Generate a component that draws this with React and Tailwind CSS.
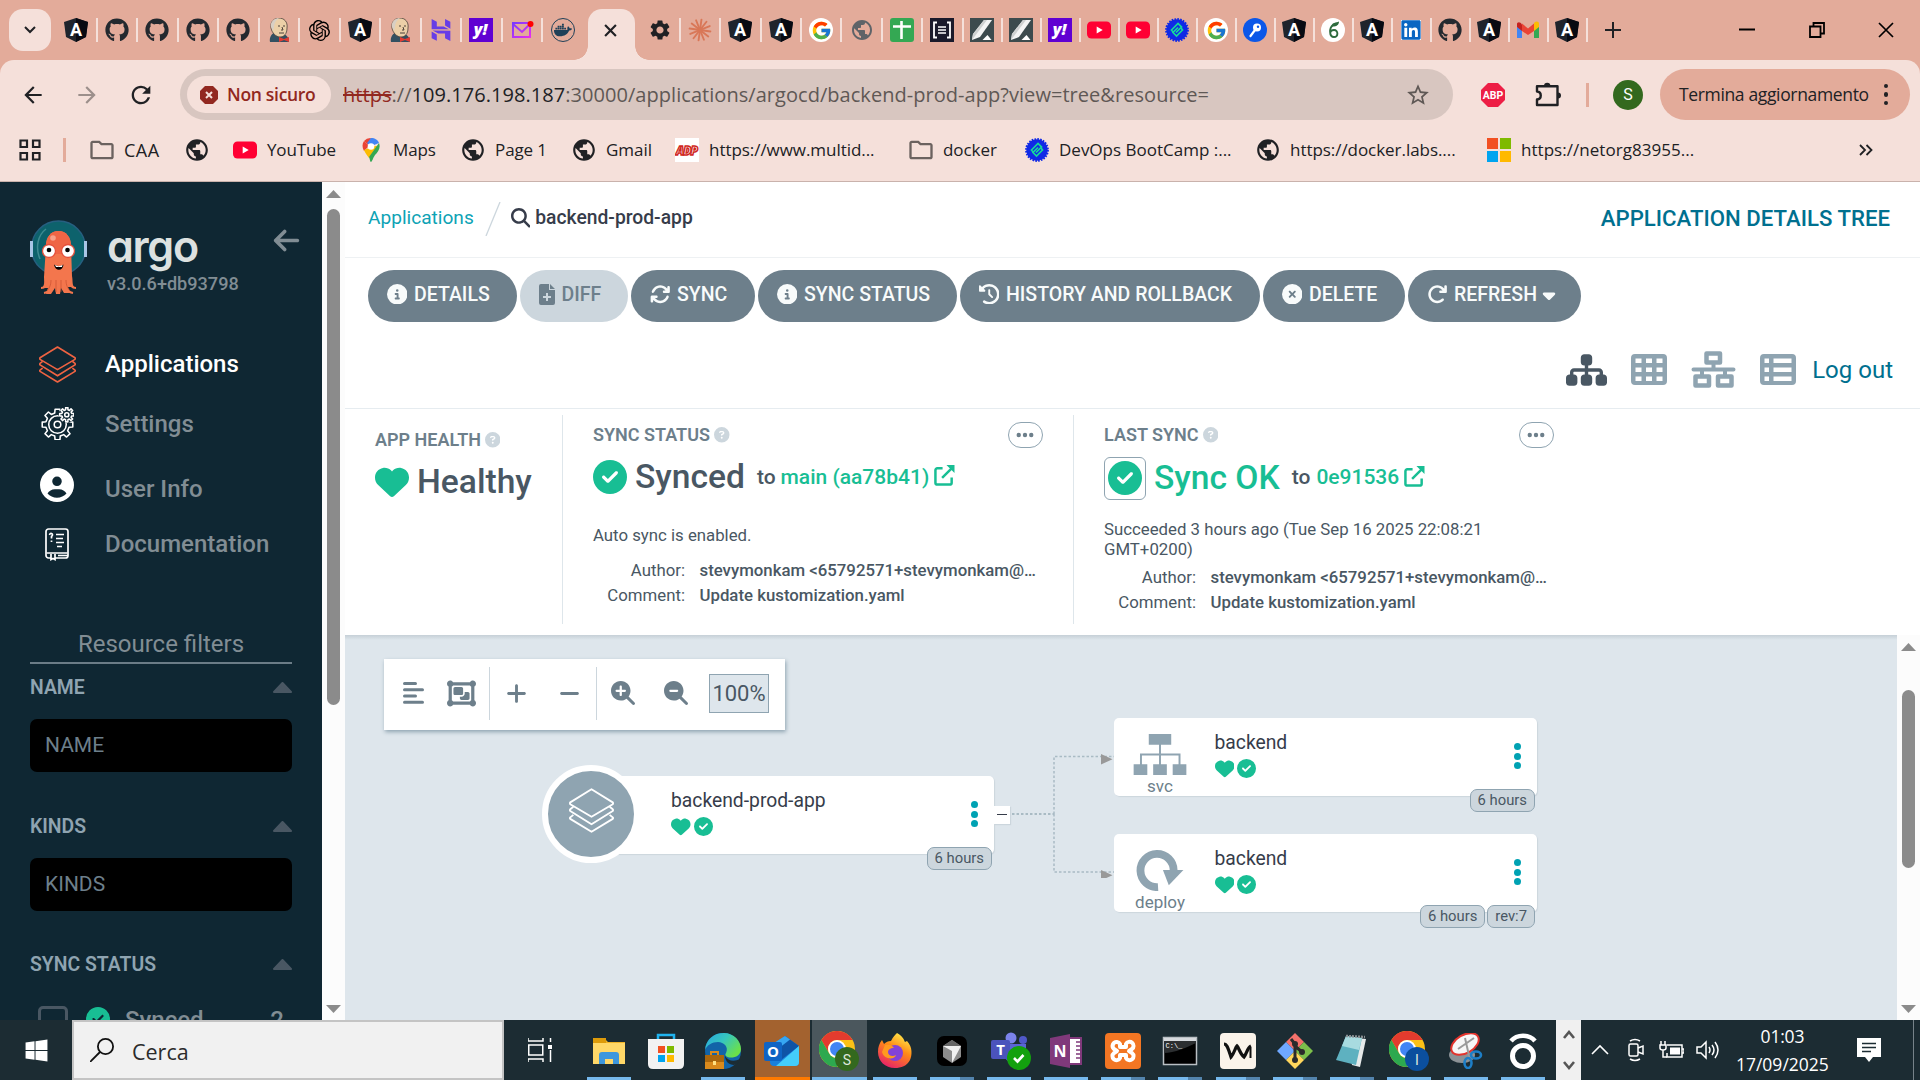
import React from "react";
import {
  FaGithub, FaDocker, FaHeart, FaCircleCheck, FaCircleInfo, FaArrowsRotate,
  FaClockRotateLeft, FaCircleXmark, FaArrowRotateRight, FaCaretDown, FaSitemap, FaArrowLeft,
  FaMagnifyingGlass, FaObjectGroup, FaPlus, FaMinus, FaMagnifyingGlassPlus, FaMagnifyingGlassMinus,
  FaWindows, FaLinkedin, FaEllipsis, FaCircleUser, FaCircleQuestion,
} from "react-icons/fa6";
import { FcGoogle } from "react-icons/fc";
import { SiOpenai, SiHostinger } from "react-icons/si";
import {
  MdPublic, MdSettings, MdStarBorder, MdRefresh, MdArrowBack, MdArrowForward, MdOutlineFolder,
} from "react-icons/md";

/* ---------- favicons ---------- */
const Angular = () => (
  <svg viewBox="0 0 24 24" className="size-6">
    <path d="M12 0l12 4-2 15-10 5-10-5L0 4z" fill="#1f242c" />
    <path d="M12 0l12 4-2 15-10 5z" fill="#080a12" />
    <text x="12" y="18" textAnchor="middle" fontFamily="Roboto" fontWeight="700" fontSize="18" fill="#fff">A</text>
  </svg>
);
const Github = () => <FaGithub className="size-6 text-[#24292f]" />;
const Jenkins = () => (
  <svg viewBox="0 0 24 24" className="size-6">
    <path d="M3 24c-1-5 2-9 6-10l7 2c4 1 6 4 6 8z" fill="#335061" />
    <path d="M4 10C3 4 7 0 12 0s9 4 8 10c0 6-3 9-7 9s-8-4-9-9z" fill="#ecd0a8" stroke="#4a4038" strokeWidth=".8" />
    <path d="M4 9c-1-5 3-9 8-9-3 2-5 5-5 9l-1 4z" fill="#d8cfc4" />
    <path d="M11 8h2M16 8h2M15 9l1 3h-2M12 15h5" stroke="#4a4038" fill="none" />
    <path d="M12 19l5 2 5-2v5l-5-2-5 2z" fill="#e13b32" />
  </svg>
);
const Yahoo = () => (
  <svg viewBox="0 0 24 24" className="size-6">
    <rect width="24" height="24" fill="#6001d2" />
    <text x="11.5" y="17" textAnchor="middle" fontFamily="Open Sans" fontWeight="800" fontStyle="italic" fontSize="16" fill="#fff">y!</text>
  </svg>
);
const Mail = () => (
  <svg viewBox="0 0 24 24" className="size-6" fill="none">
    <defs>
      <linearGradient id="mailg" x1="0" y1="0" x2="1" y2="1">
        <stop offset="0" stopColor="#7a3cff" /><stop offset="1" stopColor="#e72df0" />
      </linearGradient>
    </defs>
    <path d="M3 5h17v14H3zM3 6l9 8 8-8" stroke="url(#mailg)" strokeWidth="2" />
    <circle cx="20.5" cy="6" r="3" fill="#f00" />
  </svg>
);
const DockerRing = () => (
  <span className="flex size-6 items-center justify-center rounded-full border-[1.5px] border-[#1f4058]">
    <FaDocker className="size-4.5 text-[#1f4058]" />
  </span>
);
const Claude = () => (
  <svg viewBox="0 0 24 24" className="size-6" stroke="#d97757" strokeWidth="1.9" strokeLinecap="round">
    {[0, 30, 60, 90, 120, 150].map((a) => <path key={a} d="M12 1.5v21" transform={`rotate(${a + 8} 12 12)`} />)}
  </svg>
);
const GoogleRound = () => (
  <span className="flex size-6 items-center justify-center rounded-full bg-white"><FcGoogle className="size-[21px]" /></span>
);
const World = () => <MdPublic className="size-6 text-[#5f6368]" />;
const WorldDark = () => <MdPublic className="size-6.5 text-[#202124]" />;
const Sheets = () => (
  <svg viewBox="0 0 24 24" className="size-6">
    <rect width="24" height="24" rx="3" fill="#34a853" />
    <path d="M3 8.500h18M11.500 3v18" stroke="#fff" strokeWidth="2.600" />
  </svg>
);
const Bracket = () => (
  <svg viewBox="0 0 24 24" className="size-6" fill="none" stroke="#fff">
    <rect width="24" height="24" fill="#1a1a2b" stroke="none" />
    <path d="M7 4.500H4v15h3M17 4.500h3v15h-3" strokeWidth="1.800" />
    <path d="M8 9h8M8 12h8M8 15h8" strokeWidth="1.300" />
  </svg>
);
const Pencil = () => (
  <svg viewBox="0 0 24 24" className="size-6">
    <rect width="24" height="24" fill="#3c4a4d" />
    <path d="M14 2h8L10 19l-8 3 1-6z" fill="#f4f4f4" />
    <path d="M14 2h3L5 18l-3 4 1-6z" fill="#cfd1d1" />
    <path d="M17.500 17l4 5h-9z" fill="#fff" />
  </svg>
);
const Youtube = () => (
  <svg viewBox="0 0 24 24" className="size-6">
    <rect y="3.5" width="24" height="17" rx="4.5" fill="#ff0033" />
    <path d="M9.700 8.400v7.200l6-3.600z" fill="#fff" />
  </svg>
);
const Devops = () => (
  <svg viewBox="0 0 24 24" className="size-6">
    <circle cx="12" cy="12" r="10.700" fill="#1029e6" stroke="#1029e6" strokeWidth="2.400" strokeDasharray="1.600 1.200" />
    <g fill="none" stroke="#16d99a" strokeWidth="1.700">
      <path d="M8.500 14.500L6.500 12 13 5.500 16.500 9l-5.500 5.500" /><path d="M13 9.500L8 14.500 11.500 18 17.500 12l-1.500-2" />
    </g>
  </svg>
);
const KeyRound = () => (
  <svg viewBox="0 0 24 24" className="size-6">
    <circle cx="12" cy="12" r="12" fill="#0b57e8" />
    <circle cx="14" cy="9.500" r="4" fill="#fff" /><circle cx="15" cy="8.700" r="1.200" fill="#0b57e8" />
    <path d="M12 12l-4.500 6" stroke="#fff" strokeWidth="2.200" strokeLinecap="round" />
  </svg>
);
const Leaf = () => (
  <svg viewBox="0 0 24 24" className="size-6" fill="none">
    <circle cx="12" cy="12" r="12" fill="#fff" />
    <path d="M12 7c-4 3-4 12 1 12 4.500 0 4.500-7 0-7-2 0-3.500 1-4 3" stroke="#2e6b3e" strokeWidth="1.900" />
    <path d="M10.500 8.500C11 4 15 5 18 3.500c0 4-3.500 5.500-7.500 5z" fill="#2e6b3e" />
  </svg>
);
const Linkedin = () => (
  <span className="flex size-6 items-center justify-center"><span className="flex size-5 bg-white"><FaLinkedin className="size-full scale-110 text-[#0a66c2]" /></span></span>
);
const Gmail = () => (
  <svg viewBox="0 0 24 24" className="size-6">
    <path d="M1 6v14h5V10z" fill="#4285f4" /><path d="M23 6v14h-5V10z" fill="#34a853" />
    <path d="M18 6.500V13l5-4V6c0-3-3-3-5-1z" fill="#fbbc04" /><path d="M1 6v3l5 4V6.500C4 3 1 4 1 6z" fill="#c5221f" />
    <path d="M6 5.500V13l6 4 6-4V5.500l-6 5z" fill="#ea4335" />
  </svg>
);
const Hostinger = () => <SiHostinger className="size-[22px] text-[#673de6]" />;
const OpenAI = () => <SiOpenai className="size-[21px] text-black" />;
const Gear = () => <MdSettings className="size-6 text-[#202124]" />;

const leftTabs = [Angular, Github, Github, Github, Github, Jenkins, OpenAI, Angular, Jenkins, Hostinger, Yahoo, Mail, DockerRing];
const midTabs = [Gear, Claude, Angular, Angular, GoogleRound, World, Sheets, Bracket];
const rightTabs = [Pencil, Pencil, Yahoo, Youtube, Youtube, Devops, GoogleRound, KeyRound, Angular, Leaf, Angular, Linkedin, Github, Angular, Gmail, Angular];

const Tab = ({ icon: Icon, className, last }) => (
  <div className={`flex h-6 shrink-0 items-center justify-center ${className} ${last ? "" : "border-r-[2.500px] border-[#f5e0da]"}`}>
    <Icon />
  </div>
);

function TabStrip() {
  return (
    <div className="flex h-[60px] items-center bg-[#e3ab9a]">
      <div className="ml-[9px] flex size-[42px] shrink-0 items-center justify-center rounded-[14px] bg-[#f5e0da]">
        <svg viewBox="0 0 12 8" className="w-3" fill="none" stroke="#202124" strokeWidth="2"><path d="M1 1l5 5 5-5" /></svg>
      </div>
      <div className="ml-[6px] flex">
        {leftTabs.map((I, i) => <Tab key={i} icon={I} className="w-[40.500px]" last={i === 12} />)}
      </div>
      <div className="flex h-full w-[57px] shrink-0 items-end">
        <div className="ml-[-10px] size-[14px] shrink-0 bg-[radial-gradient(circle_at_0_0,#e3ab9a_13.500px,#f5e0da_14px)]" />
        <div className="flex h-[51px] w-[47px] shrink-0 items-center justify-center rounded-t-[14px] bg-[#f5e0da] pr-px pb-[9px]">
          <svg viewBox="0 0 12 12" className="w-[13px]" fill="none" stroke="#202124" strokeWidth="2"><path d="M1 1l10 10M11 1L1 11" /></svg>
        </div>
        <div className="size-[14px] shrink-0 bg-[radial-gradient(circle_at_100%_0,#e3ab9a_13.500px,#f5e0da_14px)]" />
      </div>
      <div className="flex">
        {midTabs.map((I, i) => <Tab key={i} icon={I} className="w-[40.400px]" />)}
        {rightTabs.map((I, i) => <Tab key={i} icon={I} className="w-[39px]" />)}
      </div>
      <svg viewBox="0 0 16 16" className="ml-[17px] w-4 shrink-0" stroke="#202124" strokeWidth="2"><path d="M8 0v16M0 8h16" /></svg>
      <div className="ml-auto flex items-center">
        <svg viewBox="0 0 16 16" className="w-4" stroke="#000" strokeWidth="2"><path d="M0 7.500h16" /></svg>
        <svg viewBox="0 0 16 16" className="ml-[54px] w-4" fill="none" stroke="#000" strokeWidth="1.800"><path d="M1 4.500h10.500V15H1zM4.500 4V1H15v10.500h-3" /></svg>
        <svg viewBox="0 0 16 16" className="mr-[26px] ml-[53px] w-4" stroke="#000" strokeWidth="1.700"><path d="M1 1l14 14M15 1L1 15" /></svg>
      </div>
    </div>
  );
}

function AddressRow() {
  return (
    <div className="flex h-[69px] items-center">
      <MdArrowBack className="ml-[20px] size-[26px] text-[#202124]" />
      <MdArrowForward className="ml-[28px] size-[26px] text-[#9c8f8b]" />
      <MdRefresh className="ml-[27px] size-[28px] text-[#202124]" />
      <div className="ml-[25px] flex h-[51px] w-[1273px] items-center rounded-full bg-[#d8c6c0] pl-[7px]">
        <div className="flex h-[37px] w-[144px] items-center rounded-full bg-[#f5e0da] pl-[13px]">
          <svg viewBox="0 0 18 18" className="w-[18px]"><path d="M5 0h8l5 5v8l-5 5H5l-5-5V5z" fill="#922820" /><path d="M6 6l6 6M12 6l-6 6" stroke="#f5e0da" strokeWidth="2" /></svg>
          <span className="ml-[9px] whitespace-nowrap font-['Open_Sans'] text-[17.500px] font-semibold tracking-[-0.300px] text-[#922820]">Non sicuro</span>
        </div>
        <span className="ml-[12px] whitespace-nowrap font-['Open_Sans'] text-[20px] tracking-[0.045px] text-[#5f5855]">
          <span className="text-[#922820] line-through">https</span>://<span className="text-[#202124]">109.176.198.187</span>:30000/applications/argocd/backend-prod-app?view=tree&amp;resource=
        </span>
        <MdStarBorder className="mr-[22px] ml-auto size-[26px] text-[#5f5855]" />
      </div>
      <svg viewBox="0 0 24 24" className="ml-[28px] w-6"><path d="M7 0h10l7 7v10l-7 7H7l-7-7V7z" fill="#ed1e45" /><text x="12" y="16" textAnchor="middle" fontFamily="Roboto" fontWeight="700" fontSize="10.500" fill="#fff">ABP</text></svg>
      <svg viewBox="0 0 26 26" className="ml-[30px] w-[26px]" fill="none">
        <path d="M2 4.200h20.500V23H2v-5.500c5-.5 5-7.500 0-8z" stroke="#202124" strokeWidth="2.400" strokeLinejoin="round" />
        <path d="M9 4a3.200 3.200 0 0 1 6.400 0zM23 10.500a3 3 0 0 1 0 6z" fill="#202124" />
      </svg>
      <div className="ml-[25px] h-6 w-[3px] bg-[#e3ab9a]" />
      <div className="ml-[24px] flex size-[30px] items-center justify-center rounded-full bg-[#33691e] font-['Roboto'] text-[16px] text-white">S</div>
      <div className="ml-[17px] flex h-[51px] w-[250px] items-center rounded-full bg-[#e3ab9a] pl-[19px]">
        <span className="whitespace-nowrap font-['Open_Sans'] text-[17.500px] tracking-[-0.350px] text-[#202124]">Termina aggiornamento</span>
        <div className="ml-auto mr-[22px] flex flex-col gap-1">
          <i className="size-[4.500px] rounded-full bg-[#202124]" /><i className="size-[4.500px] rounded-full bg-[#202124]" /><i className="size-[4.500px] rounded-full bg-[#202124]" />
        </div>
      </div>
    </div>
  );
}

const Folder = () => <MdOutlineFolder className="size-[28px] text-[#6b625f]" />;
const MapsPin = () => (
  <svg viewBox="0 0 18 24" className="h-6">
    <path d="M9 0a9 9 0 0 0-7 3l4 4z" fill="#ea4335" /><path d="M9 0c4 0 7 2 8 5l-5 2-4 1-3-3z" fill="#4285f4" />
    <path d="M2 3C0 6 0 9 2 13l5-5z" fill="#ea4335" /><path d="M2 12c1 3 3 5 5 8l10-12-5 0z" fill="#fbbc04" />
    <path d="M17 5c2 5-1 9-4 12-2 3-3 7-4 7s-1-3-2-5z" fill="#34a853" /><circle cx="9" cy="8.500" r="3.300" fill="#fff" />
  </svg>
);
const Adp = () => (
  <svg viewBox="0 0 24 24" className="size-6"><rect width="24" height="24" fill="#fff" /><text x="12" y="16.500" textAnchor="middle" fontFamily="Open Sans" fontStyle="italic" fontWeight="800" fontSize="12" textLength="22" fill="#fff" stroke="#d0271d" strokeWidth="1.400">ADP</text></svg>
);
const MsLogo = () => (
  <div className="grid size-6 grid-cols-2 gap-[2px]"><i className="bg-[#f25022]" /><i className="bg-[#7fba00]" /><i className="bg-[#00a4ef]" /><i className="bg-[#ffb900]" /></div>
);
const bookmarks = [
  [Folder, "CAA", "w-[95px]", "text-[18px] tracking-[0.500px]"],
  [WorldDark, "", "w-[48px]", "text-[17px]"],
  [Youtube, "YouTube", "w-[126px]", "text-[17px] tracking-[-0.150px]"],
  [MapsPin, "Maps", "w-[102px]", "text-[17px] tracking-[-0.100px]"],
  [WorldDark, "Page 1", "w-[111px]", "text-[17px] tracking-[-0.100px]"],
  [WorldDark, "Gmail", "w-[103px]", "text-[17px] tracking-[-0.050px]"],
  [Adp, "https://www.multid...", "w-[234px]", "text-[17px] tracking-[-0.050px]"],
  [Folder, "docker", "w-[116px]", "text-[17px] tracking-[-0.050px]"],
  [Devops, "DevOps BootCamp :...", "w-[231px]", "text-[17px]"],
  [WorldDark, "https://docker.labs....", "w-[231px]", "text-[17px] tracking-[-0.050px]"],
  [MsLogo, "https://netorg83955...", "w-[240px]", "text-[17px] tracking-[0.040px]"],
];

function Bookmarks() {
  return (
    <div className="flex h-[53px] items-center border-b-[1.500px] border-[#c9b2ac] pb-[10px]">
      <svg viewBox="0 0 22 22" className="ml-[19px] w-[22px]" fill="none" stroke="#202124" strokeWidth="2.200"><path d="M1.500 1.500h6.500v6.500H1.500zM14 1.500h6.500v6.500H14zM1.500 14h6.500v6.500H1.500zM14 14h6.500v6.500H14z" /></svg>
      <div className="ml-[22px] h-6 w-[3px] bg-[#e3ab9a]" />
      <div className="ml-[21px] flex">
        {bookmarks.map(([Icon, label, w, t], i) => (
          <div key={i} className={`flex shrink-0 items-center ${w}`}>
            <span className="flex w-[30px] shrink-0 items-center justify-center"><Icon /></span>
            <span className={`ml-[7px] whitespace-nowrap font-['Open_Sans'] text-[#202124] ${t}`}>{label}</span>
          </div>
        ))}
      </div>
      <svg viewBox="0 0 14 12" className="ml-auto mr-[47px] w-[14px]" fill="none" stroke="#202124" strokeWidth="1.800"><path d="M1 1l5 5-5 5M7.500 1l5 5-5 5" /></svg>
    </div>
  );
}

/* ---------- sidebar ---------- */
const ArgoLogo = () => (
  <svg viewBox="0 0 57 75" className="h-[75px] w-[57px] shrink-0">
    <circle cx="28.500" cy="28" r="27" fill="#0d626c" stroke="#265f80" strokeWidth="1.500" />
    <path d="M16 9c-8 6-11 18-6 30" fill="none" stroke="#3d8a91" strokeWidth="1.500" />
    <rect y="21" width="3" height="16" fill="#a9c6e6" /><rect x="54" y="21" width="3" height="16" fill="#a9c6e6" />
    <path d="M16 26c0-9 5-15 12.500-15S41 17 41 26l1 30c1 5 0 8 2 11h-6l2 6h-6l-3-5-1 6h-4l-1-6-4 6h-5l2-6h-6c3-3 2-7 2-11z" fill="#f3764d" />
    <path d="M16 26c0-9 5-15 12.500-15S41 17 41 26v8H16z" fill="#ef6545" />
    <circle cx="23" cy="18" r="2.800" fill="#f7a089" />
    <circle cx="19" cy="31" r="6.500" fill="#fff" stroke="#e5503b" strokeWidth="1.300" /><circle cx="38" cy="31" r="6.500" fill="#fff" stroke="#e5503b" strokeWidth="1.300" />
    <circle cx="19" cy="30" r="2.300" /><circle cx="37.500" cy="30" r="2.300" />
    <path d="M24 44.500c3 2 6 2 9.500 0-.5 7-8.500 7-9.500 0z" fill="#000" /><path d="M25 45c2 1.500 5 1.500 7.500 0l-.5 2h-6z" fill="#fff" />
    <path d="M11 68c5 0 6-3 6-8M46 68c-5 0-6-3-6-8M14 73c6-1 7-5 8-11M43 73c-6-1-7-5-8-11" stroke="#f3764d" strokeWidth="2" fill="none" />
    <path d="M21 60c0 6-2 8-4 11M26 60v12M31 60v12M36 60c0 6 2 8 4 11" stroke="#c9502f" strokeWidth=".7" fill="none" />
  </svg>
);
const Layers = ({ className, sw = 2 }) => (
  <svg viewBox="0 0 36 36" className={className} fill="none" stroke="currentColor" strokeWidth={sw} strokeLinejoin="round">
    <path d="M18 1L1 11.500Q.5 12.200 1 13L18 23 35 13q.5-.8 0-1.500z" />
    <path d="M3.500 15L1 17q-.5.700 0 1.400L18 29l17-10.600q.5-.7 0-1.400l-2.500-2" />
    <path d="M3.500 21.500L1 23.500q-.5.700 0 1.200L18 35l17-10.300q.5-.5 0-1.200l-2.500-2" />
  </svg>
);
const gearPath = (cx, cy, r, R, n) => {
  const pts = [];
  for (let i = 0; i < n; i++) {
    [[-0.3, r], [-0.2, R], [0.2, R], [0.3, r]].forEach(([o, q]) => {
      const a = ((i + o) / n) * Math.PI * 2;
      pts.push(`${(cx + Math.sin(a) * q).toFixed(2)} ${(cy - Math.cos(a) * q).toFixed(2)}`);
    });
  }
  return `M${pts.join("L")}z`;
};
const Gears = () => (
  <svg viewBox="0 0 32 32" className="size-[33px]" fill="none" stroke="#fff" strokeWidth="1.500" strokeLinejoin="round">
    <path d={gearPath(16, 17, 11.5, 15, 8)} /><circle cx="16" cy="17" r="8.500" /><circle cx="16" cy="17" r="3.200" />
    <circle cx="25" cy="7.500" r="8" fill="#0f2733" stroke="none" />
    <path d={gearPath(25, 7.500, 4.900, 7, 8)} /><circle cx="25" cy="7.500" r="2" />
  </svg>
);
const DocIcon = () => (
  <svg viewBox="0 0 24 33" className="h-[33px]" fill="none" stroke="#fff" strokeWidth="1.700">
    <rect x="1" y="1" width="22" height="29" rx="2.500" /><path d="M1.500 25h21M13 27.500h10" />
    <path d="M11 6.500h8M11 10.500h7M11 14.500h8M12 18.500h5" />
    <path d="M4.500 7q.5-2 2-1.500 2 .8 0 3v2M6.500 12.500v1.500" /><path d="M6 26v5.500l2-1 2 1V26" fill="#0f2733" />
  </svg>
);
const NavItem = ({ icon, label, className, iconClass = "" }) => (
  <div className={`flex h-10 shrink-0 items-center ${className}`}>
    <span className={`flex w-[54px] justify-center ${iconClass}`}>{icon}</span>
    <span className="ml-[21px] font-medium text-[24px] leading-8">{label}</span>
  </div>
);
const FilterHead = ({ children, className }) => (
  <div className={`flex h-5 items-center justify-between text-[19.400px] font-semibold text-[#8fa4b1] ${className}`}>
    <span className="pt-px">{children}</span>
    <svg viewBox="0 0 19 11" className="w-[19px]"><path d="M9.500 1L18 10H1z" fill="#495763" stroke="#495763" strokeWidth="2" strokeLinejoin="round" /></svg>
  </div>
);

function Sidebar() {
  return (
    <div className="flex h-full w-[322px] shrink-0 flex-col overflow-hidden bg-[#0f2733] px-[30px] font-['Roboto'] text-[#818d94]">
      <div className="mt-[38px] flex h-[77px] shrink-0">
        <ArgoLogo />
        <div className="ml-[20px] w-[131px] shrink-0">
          <div className="h-[54px] pt-[2px] text-[43px] leading-[48px] font-semibold tracking-[-1.300px] text-[#dde1e0] font-['Inter'] [font-feature-settings:'cv11','ss01']">argo</div>
          <div className="text-[18.100px] leading-[20px] font-medium whitespace-nowrap">v3.0.6+db93798</div>
        </div>
        <FaArrowLeft className="mt-[6px] ml-[34px] size-[29px] shrink-0" />
      </div>
      <NavItem icon={<Layers className="size-[37px] text-[#ef6342]" sw={1.6} />} label="Applications" className="mt-[47px] text-white" />
      <NavItem icon={<Gears />} label="Settings" className="mt-[20px]" iconClass="pb-[2px]" />
      <NavItem icon={<FaCircleUser className="size-[34px] text-white" />} label="User Info" className="mt-[25px]" iconClass="pb-2" />
      <NavItem icon={<DocIcon />} label="Documentation" className="mt-[15px]" />
      <div className="mt-[60px] h-[40px] shrink-0 border-b-2 border-[#6b7c87] pt-[4px] text-center text-[24px] leading-8">Resource filters</div>
      <FilterHead className="mt-[13px] shrink-0">NAME</FilterHead>
      <div className="mt-[22px] flex h-[53px] shrink-0 items-center rounded-[7px] bg-black pl-[15px] text-[21px] text-[#6d7f8b]">NAME</div>
      <FilterHead className="mt-[44px] shrink-0">KINDS</FilterHead>
      <div className="mt-[22px] flex h-[53px] shrink-0 items-center rounded-[7px] bg-black pl-[15px] text-[21px] text-[#6d7f8b]">KINDS</div>
      <FilterHead className="mt-[43px] shrink-0">SYNC STATUS</FilterHead>
      <div className="mt-[32px] flex h-[30px] shrink-0 items-center px-2 text-[24px] font-medium">
        <span className="size-[30px] rounded-[5px] border-[3px] border-[#495763]" />
        <FaCircleCheck className="ml-[18px] mb-[4px] size-6 text-[#18be94]" />
        <span className="ml-[15px] pb-[3px]">Synced</span>
        <span className="ml-auto pb-[3px]">2</span>
      </div>
    </div>
  );
}

const Tri = ({ down }) => (
  <svg viewBox="0 0 15 8" className="w-[15px] shrink-0"><path d={down ? "M0 0h15L7.500 8z" : "M0 8h15L7.500 0z"} fill="#8b8b8b" /></svg>
);

/* ---------- main area ---------- */
const Btn = ({ icon, children, w, off, caret }) => (
  <div className={`flex h-[52px] items-center rounded-full pb-[3px] pl-[18.500px] text-[19.500px] font-medium whitespace-nowrap ${w} ${off ? "bg-[#ccd6dd] text-[#6d7f8b]" : "bg-[#6d7f8b] text-[#f8fbfb]"}`}>
    {icon}<span className="ml-[7px]">{children}</span>{caret && <FaCaretDown className="ml-[2px] size-[20px]" />}
  </div>
);
const bi = "size-[20.500px] shrink-0 mb-[1px]";
const ExtLink = () => (
  <svg viewBox="0 0 22 22" className="mb-[3px] ml-[5px] w-[21px] shrink-0" fill="none" stroke="currentColor" strokeWidth="2.600">
    <path d="M9 3.500H3.500a2 2 0 0 0-2 2v13a2 2 0 0 0 2 2h13a2 2 0 0 0 2-2V13M8.500 13.500L19 3" /><path d="M13 0h8.500v8.500z" fill="currentColor" stroke="none" />
  </svg>
);
const Help = () => <FaCircleQuestion className="ml-[4px] mt-[2px] size-[15.500px] text-[#ccd6dd]" />;
const Dots = () => (
  <span className="mt-[2px] ml-auto flex h-[26px] w-[35px] items-center justify-center rounded-full border border-[#8fa4b1] text-[#6d7f8b]"><FaEllipsis className="size-5" /></span>
);
const Row = ({ k, v, className }) => (
  <div className={`flex h-5 items-center text-[16.800px] ${className}`}>
    <span className="w-[92px] shrink-0 text-right">{k}</span><span className="ml-[14.500px] font-medium whitespace-nowrap">{v}</span>
  </div>
);
const GridIcon = () => (
  <svg viewBox="0 0 36 31" className="h-[31px] w-9"><path fillRule="evenodd" fill="currentColor" d="M4 0h28a4 4 0 0 1 4 4v23a4 4 0 0 1-4 4H4a4 4 0 0 1-4-4V4a4 4 0 0 1 4-4zM4.500 4.500v4.500h6V4.500zM15 4.500v4.500h6V4.500zM25.500 4.500v4.500h6V4.500zM4.500 13.500v4.500h6v-4.500zM15 13.500v4.500h6v-4.500zM25.500 13.500v4.500h6v-4.500zM4.500 22.500v4.500h6v-4.500zM15 22.500v4.500h6v-4.500zM25.500 22.500v4.500h6v-4.500z" /></svg>
);
const ListIcon = () => (
  <svg viewBox="0 0 36 31" className="h-[31px] w-9"><path fillRule="evenodd" fill="currentColor" d="M4 0h28a4 4 0 0 1 4 4v23a4 4 0 0 1-4 4H4a4 4 0 0 1-4-4V4a4 4 0 0 1 4-4zM4.500 4.500v4.500h4.500V4.500zM13.500 4.500v4.500h18V4.500zM4.500 13.500v4.500h4.500v-4.500zM13.500 13.500v4.500h18v-4.500zM4.500 22.500v4.500h4.500v-4.500zM13.500 22.500v4.500h18v-4.500z" /></svg>
);
const NetIcon = () => (
  <svg viewBox="0 0 45 37" className="h-[37px] w-[45px]" fill="none" stroke="currentColor" strokeWidth="4.500" strokeLinejoin="round" strokeLinecap="round">
    <path d="M15.500 2.500h13.500v9H15.500zM4.500 25.500H18v9H4.500zM27 25.500h13.500v9H27z" /><path d="M2.500 18.500h40M22.500 13v4M11 20v4M34 20v4" strokeWidth="4" />
  </svg>
);

function Header() {
  return (
    <>
      <div className="flex h-[76px] shrink-0 items-center border-b-[1.500px] border-[#eef1f3] pb-[2px] pl-[23px] text-[19.100px]">
        <span className="text-[#0da3b5]">Applications</span>
        <svg viewBox="0 0 16 34" className="ml-[11px] w-4" stroke="#ccd6dd" strokeWidth="1.300"><path d="M15 0L1 34" /></svg>
        <FaMagnifyingGlass className="mb-px ml-[10px] size-[19.500px] text-[#363c4a]" />
        <span className="ml-[5px] font-medium text-[#363c4a] text-[19.300px]">backend-prod-app</span>
        <span className="mr-[30px] ml-auto text-[22.200px] font-medium text-[#00708f]">APPLICATION DETAILS TREE</span>
      </div>
      <div className="mt-3 flex shrink-0 gap-[3px] pl-[23px]">
        <Btn icon={<FaCircleInfo className={bi} />} w="w-[149px]">DETAILS</Btn>
        <Btn icon={<svg viewBox="0 0 16 21" className="w-4 h-[21px] shrink-0"><path fill="currentColor" fillRule="evenodd" d="M2 0h8v6h6v13a2 2 0 0 1-2 2H2a2 2 0 0 1-2-2V2a2 2 0 0 1 2-2zM11 0l5 5h-5zM7 9v3H4v2h3v3h2v-3h3v-2H9V9z" /></svg>} w="w-[108px]" off>DIFF</Btn>
        <Btn icon={<FaArrowsRotate className={bi} />} w="w-[124px]">SYNC</Btn>
        <Btn icon={<FaCircleInfo className={bi} />} w="w-[199px]">SYNC STATUS</Btn>
        <Btn icon={<FaClockRotateLeft className={bi} />} w="w-[300px]">HISTORY AND ROLLBACK</Btn>
        <Btn icon={<FaCircleXmark className={bi} />} w="w-[142px]">DELETE</Btn>
        <Btn icon={<FaArrowRotateRight className={bi} />} w="w-[173px]" caret>REFRESH</Btn>
      </div>
      <div className="flex h-[87px] shrink-0 items-center justify-end border-b-[1.500px] border-[#e6ecf0] pt-[9px] text-[#8fa4b1]">
        <FaSitemap className="h-[36px] w-[41px] text-[#495763]" preserveAspectRatio="none" />
        <span className="ml-[24px]"><GridIcon /></span>
        <span className="ml-[24px]"><NetIcon /></span>
        <span className="ml-[24px]"><ListIcon /></span>
        <span className="mr-[27px] ml-[16px] pt-px text-[24px] text-[#00708f]">Log out</span>
      </div>
    </>
  );
}

const commit = "stevymonkam <65792571+stevymonkam@…";
function StatusPanel() {
  return (
    <div className="flex h-[226px] shrink-0 pt-[6px] pb-[11px] text-[#495763]">
      <div className="w-[217.500px] border-r-[1.500px] border-[#dee6eb] pl-[30px]">
        <div className="mt-[14px] flex h-5 items-center text-[18px] font-semibold text-[#6d7f8b]">APP HEALTH<Help /></div>
        <div className="mt-[13px] flex h-10 items-center text-[33.600px] font-medium"><FaHeart className="size-[34px] text-[#18be94]" /><span className="ml-[8px]">Healthy</span></div>
      </div>
      <div className="w-[511px] border-r-[1.500px] border-[#dee6eb] pr-[30px] pl-[30.500px]">
        <div className="mt-[9px] flex h-5 items-center text-[18px] font-semibold text-[#6d7f8b]">SYNC STATUS<Help /><Dots /></div>
        <div className="mt-[13px] flex h-10 items-center text-[22px] font-medium text-[#18be94]">
          <FaCircleCheck className="size-[34px] shrink-0" /><span className="ml-[8px] pt-px text-[33.600px] text-[#495763]">Synced</span>
          <span className="ml-[12px] pt-px text-[#495763] text-[21px]">to</span><span className="ml-[5px] pt-px text-[21px] whitespace-nowrap">main (aa78b41)</span><ExtLink />
        </div>
        <div className="mt-[28px] h-5 text-[16.800px] leading-5">Auto sync is enabled.</div>
        <Row className="mt-[16px]" k="Author:" v={commit} />
        <Row className="mt-[5px]" k="Comment:" v="Update kustomization.yaml" />
      </div>
      <div className="w-[511px] pr-[31px] pl-[30.500px]">
        <div className="mt-[9px] flex h-5 items-center text-[18px] font-semibold text-[#6d7f8b]">LAST SYNC<Help /><Dots /></div>
        <div className="mt-[14px] flex h-10 items-center text-[22px] font-medium text-[#18be94]">
          <span className="flex h-[43px] w-[42px] shrink-0 items-center justify-center rounded-[6px] border border-[#8fa4b1]"><FaCircleCheck className="size-[34px]" /></span>
          <span className="ml-[8px] text-[33.600px]">Sync OK</span>
          <span className="ml-[12px] text-[#495763] text-[21px]">to</span><span className="ml-[6px] text-[21px] whitespace-nowrap">0e91536</span><ExtLink />
        </div>
        <div className="mt-[21px] w-[400px] text-[16.800px] leading-5">Succeeded 3 hours ago (Tue Sep 16 2025 22:08:21 GMT+0200)</div>
        <Row className="mt-[9px]" k="Author:" v={commit} />
        <Row className="mt-[5px]" k="Comment:" v="Update kustomization.yaml" />
      </div>
    </div>
  );
}

const Kebab = () => (
  <div className="mb-[2px] ml-auto mr-[16px] flex flex-col gap-[2.500px]"><i className="size-[7px] rounded-full bg-[#00a2b3]" /><i className="size-[7px] rounded-full bg-[#00a2b3]" /><i className="size-[7px] rounded-full bg-[#00a2b3]" /></div>
);
const Badge = ({ children }) => (
  <span className="flex h-[23px] items-center rounded-[7px] border border-[#8fa4b1] bg-[#ccd6dd] px-[7px] text-[14.800px] text-[#495763] whitespace-nowrap">{children}</span>
);
const NodeCard = ({ name, kind, icon, badges, className }) => (
  <div className={`absolute flex h-[78px] items-center rounded-[5px] bg-white shadow-[1px_1px_1px_#ccd6dd] ${className}`}>
    {kind && <div className="flex h-full w-[92px] flex-col items-center pt-[16px] text-[17px] leading-5 text-[#6d7f8b]">{icon}<span className="mt-[1px]">{kind}</span></div>}
    <div className={kind ? "ml-[8.500px]" : "ml-[80px]"}>
      <div className="h-5 text-[19.300px] leading-5 text-[#363c4a]">{name}</div>
      <div className="mt-[6px] mb-[3px] flex items-center gap-[3px] text-[#18be94]"><FaHeart className="size-[19.500px]" /><FaCircleCheck className="size-[19px]" /></div>
    </div>
    <Kebab />
    <div className="absolute -bottom-4 right-[2px] flex gap-[2px]">{badges.map((b) => <Badge key={b}>{b}</Badge>)}</div>
  </div>
);
const SvcIcon = () => (
  <svg viewBox="0 0 54 42" className="h-[42px] w-[54px]" fill="#8fa4b1"><path d="M15.500 0h23v11h-23zM0 31h14v11H0zM20 31h14v11H20zM40 31h14v11H40z" /><path d="M27 10v22M7.500 32V21H47v11" fill="none" stroke="#8fa4b1" strokeWidth="2" /></svg>
);
const DeployIcon = () => (
  <svg viewBox="0 0 48 42" className="h-[42px] w-[48px]"><path d="M22 38A17 17 0 1 1 38 21" fill="none" stroke="#8fa4b1" strokeWidth="8" /><path d="M27 20.500h21L33 36z" fill="#8fa4b1" /></svg>
);
/* Dotted connectors from the application node to its two children */
const Edges = () => (
  <svg viewBox="0 0 104 126" className="absolute top-[117px] left-[667px] w-[104px]" fill="none">
    <g stroke="#a9bbc4" strokeWidth="1.500" strokeDasharray="2.500 2">
      <path d="M0 62h42" strokeWidth="2.200" /><path d="M42 62V4.500h60" /><path d="M42 62v58h60" />
    </g>
    <path d="M89 2l11.500 5.200L89 12.500zM89 118l11.500 5.200-11.500 5.200z" fill="#999" />
  </svg>
);

function Canvas() {
  return (
    <div className="relative min-w-0 flex-1 overflow-hidden bg-[#dee6ec]">
      <div className="h-[5px] bg-linear-to-b from-[#c6d0d7] to-[#dee6ec]" />
      <div className="mt-[19px] ml-[39px] flex h-[71px] w-[401px] items-center bg-white pb-[3px] text-[#6d7f8b] shadow-[1px_2px_4px_#8fa4b1]">
        <svg viewBox="0 0 21 22" className="ml-[19px] w-[21px]" stroke="currentColor" strokeWidth="3" strokeLinecap="round"><path d="M1.500 1.500h11M1.500 7.800h18M1.500 14h11M1.500 20.300h18" /></svg>
        <FaObjectGroup className="ml-[23px] size-[29px]" />
        <div className="ml-[13px] h-[53px] w-px bg-[#ccd6dd]" />
        <FaPlus className="ml-[14.500px] size-[23px]" />
        <FaMinus className="ml-[30px] size-[23px]" />
        <div className="ml-[15.500px] h-[53px] w-px bg-[#ccd6dd]" />
        <FaMagnifyingGlassPlus className="ml-[14px] size-[24px]" />
        <FaMagnifyingGlassMinus className="ml-[29px] size-[24px]" />
        <div className="ml-[21px] flex h-[39px] w-[60px] items-center justify-center border-[1.500px] border-[#8fa4b1] bg-[#dee6ec] text-[22px] text-[#495763]">100%</div>
      </div>
      <Edges />
      <NodeCard className="top-[141px] left-[246px] w-[403px]" name="backend-prod-app" badges={["6 hours"]} />
      <div className="absolute top-[130px] left-[197px] flex size-[98px] items-center justify-center rounded-full border-[6px] border-white bg-[#8fa4b1] pb-[8px] text-white"><Layers className="size-[45px]" sw={1.5} /></div>
      <div className="absolute top-[171px] left-[649px] flex h-[18px] w-4 items-center bg-white shadow-[1px_1px_1px_#ccd6dd]"><i className="mb-px ml-[3px] h-[1.500px] w-[10px] bg-[#363c4a]" /></div>
      <NodeCard className="top-[83px] left-[769px] w-[423px]" name="backend" kind="svc" icon={<SvcIcon />} badges={["6 hours"]} />
      <NodeCard className="top-[199px] left-[769px] w-[423px]" name="backend" kind="deploy" icon={<DeployIcon />} badges={["6 hours", "rev:7"]} />
    </div>
  );
}

/* ---------- taskbar ---------- */
const Chrome = ({ badge, badgeColor }) => (
  <svg viewBox="0 0 40 40" className="size-10">
    <circle cx="18" cy="18" r="18" fill="#fbc116" />
    <path d="M2.400 9A18 18 0 0 1 33.600 9H18a9 9 0 0 0-7.800 13.500z" fill="#e33b2e" />
    <path d="M2.400 9A18 18 0 0 0 18 36l7.800-13.500A9 9 0 0 1 10.200 22.500z" fill="#2da94f" />
    <circle cx="18" cy="18" r="9" fill="#fff" /><circle cx="18" cy="18" r="7" fill="#4285f4" />
    <circle cx="28" cy="28" r="12" fill={badgeColor} />
    <text x="28" y="33.500" textAnchor="middle" fontFamily="Roboto" fontSize="14" fill="#dfe8dc">{badge}</text>
  </svg>
);
const Svg36 = ({ children }) => <svg viewBox="0 0 36 36" className="size-9">{children}</svg>;
const Explorer = () => <Svg36><path d="M2 6h12l3 3h17v22H2z" fill="#f0b429" /><path d="M2 10h32v21H2z" fill="#ffd868" /><path d="M2 5h13v5H2z" fill="#dd9b0a" /><path d="M8 31V22a3 3 0 0 1 3-3h14a3 3 0 0 1 3 3v9h-6v-5h-8v5z" fill="#3d97dd" /></Svg36>;
const Store = () => <Svg36><path d="M10 7V2h16v5" fill="none" stroke="#20b4f0" strokeWidth="2.500" /><path d="M0 6h36v25q0 5-5 5H5q-5 0-5-5z" fill="#f2f2f2" /><path d="M10 13h7v7h-7z" fill="#f25022" /><path d="M19 13h7v7h-7z" fill="#7fba00" /><path d="M10 22h7v7h-7z" fill="#00a4ef" /><path d="M19 22h7v7h-7z" fill="#ffb900" /></Svg36>;
const Edge = () => (
  <Svg36>
    <defs>
      <linearGradient id="edg" x1="0" y1="0" x2="1" y2=".6"><stop offset="0" stopColor="#2aa7e0" /><stop offset=".5" stopColor="#35c6c0" /><stop offset="1" stopColor="#6be04a" /></linearGradient>
    </defs>
    <circle cx="18" cy="18" r="18" fill="#1264a8" />
    <path d="M0 17C1 6 9 0 19 0c10 0 17 8 17 16 0 6-5 8.500-10 8.500-4 0-7-2-5-4.500 3-6-2-11-8-11S2 12 0 17z" fill="url(#edg)" />
    <path d="M20 23c3 5 9 6 15 3-1 2-3 5-6 6-5 0-9-4-9-9z" fill="#1c2c33" />
    <rect y="22" width="19" height="14" fill="#d98a1c" /><rect y="22" width="19" height="7" fill="#a9660c" /><path d="M6 22v-3h7v3" fill="none" stroke="#d98a1c" strokeWidth="2" /><rect x="8" y="28" width="3" height="4" fill="#ffe082" />
  </Svg36>
);
const Outlook = () => <Svg36><path d="M6 13L21 3l14 10v16a4 4 0 0 1-4 4H10a4 4 0 0 1-4-4z" fill="#1a80dc" /><path d="M21 3l14 10-18 14-7-8z" fill="#0f53a6" /><path d="M21 3l5 3.500L10 19V10z" fill="#37a6f2" /><path d="M35 13v16a4 4 0 0 1-4 4H12z" fill="#44cdfa" /><rect y="9" width="18" height="19" rx="2" fill="#0f64c4" /><text x="9" y="24" textAnchor="middle" fontFamily="Open Sans" fontWeight="700" fontSize="15" fill="#fff">O</text></Svg36>;
const Firefox = () => <Svg36><defs><linearGradient id="ffx" x1=".8" y1="0" x2=".3" y2="1"><stop offset="0" stopColor="#fff44f" /><stop offset=".45" stopColor="#ff8a16" /><stop offset="1" stopColor="#e8206a" /></linearGradient></defs><path d="M20 0c6 3 7 7 8 9l2-1c6 6 5 15 3 19-3 6-9 8-15 8C8 35 1 28 1 19c0-5 1-8 4-12l2 4c2-2 4-3 7-3 2-4 4-6 6-8z" fill="url(#ffx)" /><circle cx="18" cy="20" r="8" fill="#8242d8" /><path d="M8 12c5-1 7 0 9 3-4 0-6 2-6 4 0 4 5 5 8 3-1 5-12 5-14-3z" fill="#ff9a1f" /></Svg36>;
const CursorApp = () => <Svg36><rect x="3" y="3" width="30" height="30" rx="7" fill="#000" /><path d="M18 7l9 6v11l-9 6-9-6V13z" fill="#8c8c8c" /><path d="M9 13h18L18 30V18z" fill="#f0f0f0" /><path d="M18 7l9 6H9z" fill="#666" /></Svg36>;
const Teams = () => <svg viewBox="0 0 42 38" className="ml-[5px] h-[38px] w-[42px]"><circle cx="20" cy="6" r="5.500" fill="#7b83eb" /><circle cx="32" cy="8" r="4" fill="#5059c9" /><path d="M13 12h22v12c0 6-5 8-9 8-7 0-12-4-13-9z" fill="#5b64d6" /><rect y="8" width="19" height="19" rx="2" fill="#4b53bc" /><text x="9.500" y="23" textAnchor="middle" fontFamily="Open Sans" fontWeight="700" fontSize="15" fill="#fff">T</text><circle cx="28" cy="26" r="12" fill="#13a10e" /><path d="M23 26l3.500 3.500 6-6.500" fill="none" stroke="#fff" strokeWidth="2.600" /></svg>;
const OneNote = () => <Svg36><path d="M20 5h13v26H20z" fill="#fff" stroke="#80397b" strokeWidth="2" /><path d="M28 9h5M28 13h5M28 17h5M28 21h5M28 25h5" stroke="#80397b" strokeWidth="1.400" /><path d="M2 5l20-4v34L2 31z" fill="#80397b" /><text x="12" y="24" textAnchor="middle" fontFamily="Open Sans" fontWeight="700" fontSize="16" fill="#fff">N</text></Svg36>;
const Xampp = () => <Svg36><rect width="36" height="36" rx="4" fill="#f37623" /><path d="M12 9a4 4 0 0 0-3 7l3 2-3 2a4 4 0 1 0 6 5v-3h6v3a4 4 0 1 0 6-5l-3-2 3-2a4 4 0 1 0-6-5v3h-6v-3a4 4 0 0 0-3-2z" fill="none" stroke="#fff" strokeWidth="4" strokeLinejoin="round" /></Svg36>;
const Cmd = () => <Svg36><rect x="1.500" y="4.500" width="33" height="27" fill="#000" stroke="#b9bfc4" strokeWidth="1.500" /><rect x="2" y="5" width="32" height="3" fill="#d6dade" /><path d="M2 20C12 20 26 14 34 10V8H2z" fill="#2c2f31" /><text x="3.500" y="15" fontFamily="Liberation Mono" fontSize="7" fill="#fff">C:\_</text></Svg36>;
const Wapp = () => <Svg36><rect width="36" height="36" rx="4" fill="#faf3ea" /><path d="M4 11c3 0 4 4 7 13 3-3 4-9 6-11 2 2 3 8 7 11 3-4 3-9 7-11" fill="none" stroke="#111" strokeWidth="3.200" /><path d="M30.500 15v10" stroke="#111" strokeWidth="2" /></Svg36>;
const GitApp = () => <Svg36><path d="M18 0l9 9-9 9-9-9z" fill="#f4716b" /><path d="M9 9l9 9-9 9-9-9z" fill="#6fa8ff" /><path d="M27 9l9 9-9 9-9-9z" fill="#7cc04b" /><path d="M18 18l9 9-9 9-9-9z" fill="#ffd65c" /><path d="M14 6l4 5v18M18 13l7 6" stroke="#2b2b2b" strokeWidth="3" fill="none" /><g fill="#2b2b2b"><circle cx="18" cy="11" r="3" /><circle cx="25" cy="19" r="3" /><circle cx="18" cy="27" r="3" /></g></Svg36>;
const Notepad = () => <Svg36><path d="M13 4l19 2-6 28-8-2z" fill="#e6eaea" /><path d="M12 3l16 2-6 27L2 27z" fill="#5eb1c0" /><path d="M12 3l16 2-3 12L8 13z" fill="#a8dbe0" /><path d="M12 3l19 1" stroke="#8a8f92" strokeWidth="2.500" strokeDasharray="2 1" /></Svg36>;
const Snip = () => <Svg36><ellipse cx="14" cy="22" rx="13" ry="8" fill="#8c9296" /><ellipse cx="17" cy="11" rx="15" ry="9" transform="rotate(-30 17 11)" fill="#f6f6f6" stroke="#e2342d" strokeWidth="2" /><path d="M10 16L26 5M17 5l5 22" stroke="#9a9a9a" strokeWidth="2" /><g fill="none" stroke="#1d7ec6" strokeWidth="2.600"><ellipse cx="28" cy="22" rx="5" ry="3.500" /><ellipse cx="20" cy="30" rx="3.500" ry="5" /></g></Svg36>;
const Oapp = () => <Svg36><circle cx="18" cy="23" r="10.500" fill="none" stroke="#fff" strokeWidth="5" /><path d="M6 8c6-7 18-7 24 0" fill="none" stroke="#fff" strokeWidth="4.500" /></Svg36>;

const taskApps = [
  [Explorer, "line"], [Store, ""], [Edge, "line"], [Outlook, "alert"], [() => <Chrome badge="S" badgeColor="#33691e" />, "active"],
  [Firefox, "line"], [CursorApp, "multi"], [Teams, "line"], [OneNote, "line"], [Xampp, "multi"], [Cmd, "multi"], [Wapp, "multi"],
  [GitApp, "multi"], [Notepad, "multi"], [() => <Chrome badge="I" badgeColor="#0b4f9e" />, "line"], [Snip, "line"], [Oapp, "line"],
];
const cellBg = { alert: "bg-[#a3622f]", active: "bg-[#4b575d]" };

function Taskbar() {
  return (
    <div className="flex h-[60px] shrink-0 bg-[#1c2c33] text-white">
      <div className="flex w-[72px] items-center justify-center"><FaWindows className="size-[25px]" /></div>
      <div className="flex w-[432px] items-center border-2 border-[#c4c4c4] bg-[#f1f1f1] pl-4">
        <svg viewBox="0 0 24 24" className="w-6" fill="none" stroke="#111" strokeWidth="1.800"><circle cx="15.500" cy="8.500" r="7.600" /><path d="M10 14L0 24" /></svg>
        <span className="ml-[18px] pt-[4px] font-['Open_Sans'] text-[21.500px] text-[#2b2b2b]">Cerca</span>
      </div>
      <div className="flex w-[76px] items-center justify-center pr-1 pb-[1px]">
        <svg viewBox="0 0 24 24" className="w-6" fill="none" stroke="#fff" strokeWidth="1.500"><path d="M0 0v3h15V0M.75 7h14v10h-14zM0 24v-3h15v3M22.500 0v4M22.500 12v12" /><path d="M20 7h4v4h-4z" fill="#fff" stroke="none" /></svg>
      </div>
      <div className="flex">
        {taskApps.map(([Icon, state], i) => (
          <div key={i} className="flex w-[57.150px] justify-center">
            <div className={`flex h-full shrink-0 flex-col items-center ${state === "alert" || state === "active" ? "ml-[4px] w-[55px]" : "ml-px w-[44px]"} ${cellBg[state] || ""}`}>
              <div className="flex h-[57px] items-center justify-center pt-[4px]"><Icon /></div>
              {state && (
                <div className={`flex h-[3px] w-full justify-end ${state === "alert" ? "bg-[#ff7a00]" : "bg-[#76b9ed]"}`}>
                  {state === "multi" && <i className="w-[14px] bg-[#5384ad]" />}
                </div>
              )}
            </div>
          </div>
        ))}
      </div>
      <div className="ml-[5px] flex w-[25px] flex-col items-center justify-between bg-[#f0f0f0] py-[10px]">
        <svg viewBox="0 0 12 9" className="w-3" fill="none" stroke="#555" strokeWidth="2.600"><path d="M1 8l5-6 5 6" /></svg>
        <svg viewBox="0 0 12 9" className="w-3" fill="none" stroke="#555" strokeWidth="2.600"><path d="M1 1l5 6 5-6" /></svg>
      </div>
      <svg viewBox="0 0 18 10" className="ml-[10px] w-[18px]" fill="none" stroke="#fff" strokeWidth="1.600"><path d="M1 9l8-8 8 8" /></svg>
      <svg viewBox="0 0 18 24" className="ml-[18px] w-[18px]" fill="none" stroke="#fff" strokeWidth="1.500"><rect x="2" y="6" width="9" height="12" rx="1.500" /><path d="M11 10l5-2v8l-5-2M3 3q5-3 10 0M3 21q5 3 10 0" /></svg>
      <svg viewBox="0 0 25 20" className="ml-[14px] w-[25px]" fill="none" stroke="#fff" strokeWidth="1.500"><path d="M8 5h15v12H8v-4M23 9h2v4h-2" /><path d="M11 7.500h10v7H11z" fill="#fff" stroke="none" /><path d="M2 1v4M6 1v4M1 5h6v3q0 2-3 2t-3-2zM4 10v7h4" /></svg>
      <svg viewBox="0 0 24 20" className="ml-[12px] w-6" fill="none" stroke="#fff" strokeWidth="1.500"><path d="M1 7h4l5-5v16l-5-5H1zM13 7q2 3 0 6M16 5q4 5 0 10M19 2q6 8 0 16" /></svg>
      <div className="ml-[11px] flex w-[102px] flex-col items-center justify-center font-['Open_Sans'] text-[17.500px] leading-[28px]">
        <span className="tracking-[-0.200px]">01:03</span><span>17/09/2025</span>
      </div>
      <svg viewBox="0 0 24 24" className="ml-[24px] w-6"><path d="M0 0h24v19h-8l-4 5-4-5H0z" fill="#fff" /><path d="M5 5.500h14M5 9.500h14M5 13.500h9" stroke="#1c2c33" strokeWidth="1.500" /></svg>
      <div className="ml-auto mr-[6px] w-px bg-[#77838a]" />
    </div>
  );
}

export default function App() {
  return (
    <div className="flex h-[1080px] w-[1920px] flex-col overflow-hidden bg-white">
      <div className="shrink-0 bg-[#e3ab9a]">
        <TabStrip />
        <div className="rounded-t-[14px] bg-[#f5e0da]"><AddressRow /><Bookmarks /></div>
      </div>
      <div className="flex min-h-0 flex-1">
        <Sidebar />
        <div className="flex w-[23px] shrink-0 flex-col items-center bg-[#fcfcfc] pt-2 pb-[7px]">
          <Tri /><div className="mt-[11px] h-[496px] w-[13px] rounded-full bg-[#8b8b8b]" /><div className="flex-1" /><Tri down />
        </div>
        <div className="flex min-w-0 flex-1 flex-col font-['Roboto']">
          <Header />
          <StatusPanel />
          <div className="flex min-h-0 flex-1">
            <Canvas />
            <div className="flex w-[23px] shrink-0 flex-col items-center bg-[#fcfcfc] pt-2 pb-[7px]">
              <Tri /><div className="mt-[38.500px] h-[178px] w-[13px] rounded-full bg-[#8b8b8b]" /><div className="flex-1" /><Tri down />
            </div>
          </div>
        </div>
      </div>
      <Taskbar />
    </div>
  );
}
